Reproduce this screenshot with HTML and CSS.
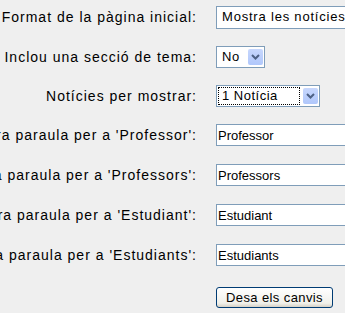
FILE: index.html
```html
<!DOCTYPE html>
<html lang="ca">
<head>
    <meta charset="UTF-8">
    <title>Configuració del lloc</title>
    <link rel="stylesheet" href="styles.css">
</head>
<body>
    <form class="settings">
        <div class="row">
            <div class="label">Format de la pàgina inicial:</div>
            <div class="field">
                <div class="box select wide"><span class="value">Mostra les notícies del lloc</span></div>
            </div>
        </div>
        <div class="row">
            <div class="label">Inclou una secció de tema:</div>
            <div class="field">
                <div class="box select short"><span class="value">No</span><span class="arrow"><svg width="9" height="6" viewBox="0 0 9 6"><path d="M1 1 L4.5 4.5 L8 1" fill="none" stroke="#4d6185" stroke-width="2"/></svg></span></div>
            </div>
        </div>
        <div class="row tight">
            <div class="label">Notícies per mostrar:</div>
            <div class="field">
                <div class="box select news"><span class="value focus">1 Notícia</span><span class="arrow"><svg width="9" height="6" viewBox="0 0 9 6"><path d="M1 1 L4.5 4.5 L8 1" fill="none" stroke="#4d6185" stroke-width="2"/></svg></span></div>
            </div>
        </div>
        <div class="row">
            <div class="label">Una altra paraula per a 'Professor':</div>
            <div class="field"><input class="box text" type="text" value="Professor"></div>
        </div>
        <div class="row">
            <div class="label">Una altra paraula per a 'Professors':</div>
            <div class="field"><input class="box text" type="text" value="Professors"></div>
        </div>
        <div class="row">
            <div class="label">Una altra paraula per a 'Estudiant':</div>
            <div class="field"><input class="box text" type="text" value="Estudiant"></div>
        </div>
        <div class="row">
            <div class="label">Una altra paraula per a 'Estudiants':</div>
            <div class="field"><input class="box text" type="text" value="Estudiants"></div>
        </div>
        <div class="row">
            <div class="label"></div>
            <div class="field"><button type="button" class="save">Desa els canvis</button></div>
        </div>
    </form>
</body>
</html>
```

FILE: styles.css
```css
html, body {
    margin: 0;
    background-color: #efefef;
    overflow: hidden;
}

body {
    width: 345px;
    height: 313px;
    font-family: "Liberation Sans", Arial, sans-serif;
}

.settings {
    margin-top: -3px;
}

.row {
    display: flex;
    align-items: center;
    height: 40px;
}

.row.tight {
    height: 38px;
}

.label {
    flex: 0 0 197px;
    width: 197px;
    min-width: 0;
    display: flex;
    justify-content: flex-end;
    white-space: nowrap;
    font-size: 14px;
    letter-spacing: 1px;
    color: #000;
    margin-right: 19px;
}

.field {
    flex: 0 0 auto;
    display: flex;
}

.box {
    box-sizing: border-box;
    height: 22px;
    border: 1px solid #7f9db9;
    background-color: #fff;
    font-family: "Liberation Sans", Arial, sans-serif;
    font-size: 13px;
    color: #000;
}

.select {
    display: flex;
    align-items: center;
    padding: 1px;
    white-space: nowrap;
    letter-spacing: 0.5px;
}

.select .value {
    padding: 0 6px 0 4px;
    line-height: 16px;
}

.wide {
    width: 200px;
    height: 23px;
    padding-left: 1px;
    letter-spacing: 0.8px;
}

.short .value {
    width: 20px;
    padding: 0 6px 0 4px;
}

.news .value {
    width: 82px;
    padding: 0 0 0 3px;
    border: 1px dotted #000;
    margin-right: 3px;
    line-height: 16px;
    box-sizing: border-box;
}

.arrow {
    width: 15px;
    height: 16px;
    border-radius: 2px;
    background: linear-gradient(#c7d7fd, #b0c7fb);
    display: flex;
    align-items: center;
    justify-content: center;
}

.text {
    width: 200px;
    padding: 0 1px;
}

.save {
    margin-top: 4px;
    height: 21px;
    width: 117px;
    border: 1px solid #003c74;
    border-radius: 3px;
    background: linear-gradient(#ffffff, #f0f0ea 80%, #d6d0c5);
    font-family: "Liberation Sans", Arial, sans-serif;
    font-size: 13px;
    letter-spacing: 0.4px;
    color: #000;
    padding: 0;
}
```
